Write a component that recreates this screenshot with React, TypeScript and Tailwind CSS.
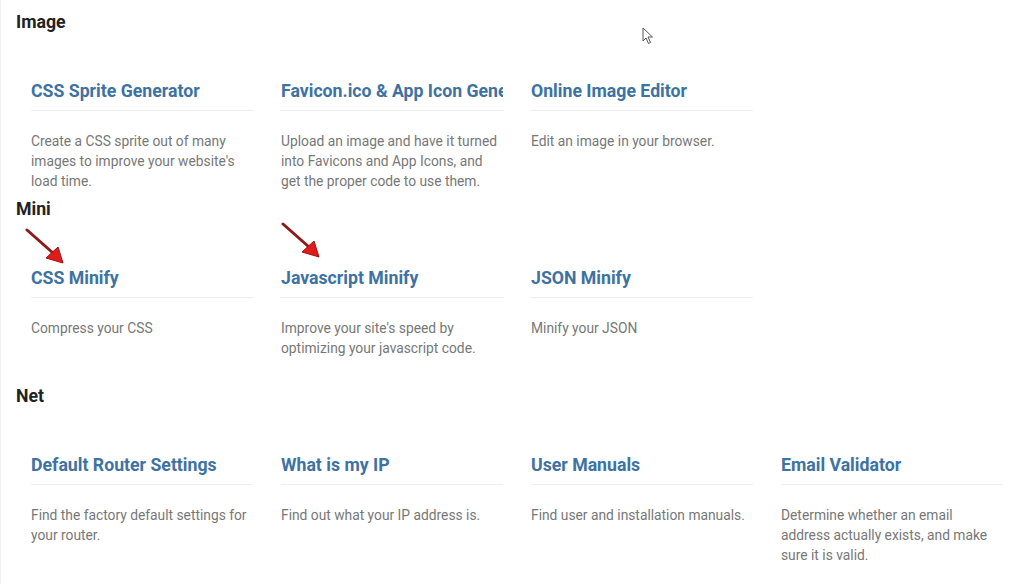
import React from "react";

type Tool = { title: string; desc: string };
type Section = { name: string; tools: Tool[] };

const sections: Section[] = [
  {
    name: "Image",
    tools: [
      {
        title: "CSS Sprite Generator",
        desc: "Create a CSS sprite out of many images to improve your website's load time.",
      },
      {
        title: "Favicon.ico & App Icon Generator",
        desc: "Upload an image and have it turned into Favicons and App Icons, and get the proper code to use them.",
      },
      { title: "Online Image Editor", desc: "Edit an image in your browser." },
    ],
  },
  {
    name: "Mini",
    tools: [
      { title: "CSS Minify", desc: "Compress your CSS" },
      {
        title: "Javascript Minify",
        desc: "Improve your site's speed by optimizing your javascript code.",
      },
      { title: "JSON Minify", desc: "Minify your JSON" },
    ],
  },
  {
    name: "Net",
    tools: [
      {
        title: "Default Router Settings",
        desc: "Find the factory default settings for your router.",
      },
      { title: "What is my IP", desc: "Find out what your IP address is." },
      { title: "User Manuals", desc: "Find user and installation manuals." },
      {
        title: "Email Validator",
        desc: "Determine whether an email address actually exists, and make sure it is valid.",
      },
    ],
  },
];

function Arrow({ className }: { className: string }) {
  return (
    <svg className={className} width="44" height="40" viewBox="0 0 44 40">
      <line x1="2" y1="2" x2="28" y2="25" stroke="#8b1a1a" strokeWidth="3" strokeLinecap="round" />
      <polygon points="38,35 21,30 33,19" fill="#e01b1b" stroke="#a01010" strokeWidth="1" />
    </svg>
  );
}

function Cursor() {
  return (
    <svg className="absolute left-[641px] top-[27px]" width="13" height="18" viewBox="0 0 13 18">
      <path d="M1 1 L1 14 L4 11 L6.5 16.5 L8.5 15.5 L6 10 L10.5 10 Z" fill="#fff" stroke="#555" strokeWidth="1" />
    </svg>
  );
}

function ToolCard({ tool }: { tool: Tool }) {
  return (
    <div className="w-[222px] h-[163px] pt-[45px] overflow-hidden">
      <div className="text-[17.7px] leading-6 font-bold text-[#3d72a3] whitespace-nowrap overflow-hidden">
        {tool.title}
      </div>
      <div className="mt-[7px] border-t border-[#efefef]" />
      <p className="mt-5 text-[13.8px] leading-5 text-[#777]">{tool.desc}</p>
    </div>
  );
}

export default function App() {
  return (
    <div
      className="relative w-[1024px] h-[584px] overflow-hidden bg-white pt-[10px] border-l border-[#f2f2f2]"
      style={{ fontFamily: "Roboto, 'Liberation Sans', sans-serif" }}
    >
      {sections.map((s) => (
        <section key={s.name}>
          <h2 className="pl-[15px] text-[17.7px] leading-6 font-bold text-[#222]">{s.name}</h2>
          <div className="flex gap-[28px] pl-[30px]">
            {s.tools.map((t) => (
              <ToolCard key={t.title} tool={t} />
            ))}
          </div>
        </section>
      ))}
      <Arrow className="absolute left-[24px] top-[228px]" />
      <Arrow className="absolute left-[280px] top-[222px]" />
      <Cursor />
    </div>
  );
}
